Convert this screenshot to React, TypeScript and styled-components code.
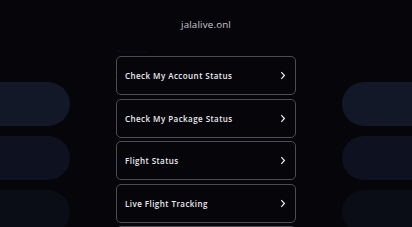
import React from "react";
import styled, { createGlobalStyle } from "styled-components";

const Global = createGlobalStyle`
  html, body { margin: 0; padding: 0; background: #05050a; }
  body { width: 412px; height: 227px; overflow: hidden; font-family: "Open Sans", "DejaVu Sans", sans-serif; }
`;

const Page = styled.div`
  display: grid;
  grid-template-columns: 70px 180px 70px;
  justify-content: space-between;
  width: 412px;
  height: 227px;
  overflow: hidden;
`;

const Side = styled.div`
  display: flex;
  flex-direction: column;
  gap: 10px;
  padding-top: 82px;
`;

const Pill = styled.div<{ $shade: string; $side: "left" | "right" }>`
  height: 44px;
  flex: none;
  background: ${(p) => p.$shade};
  border-radius: ${(p) => (p.$side === "left" ? "0 22px 22px 0" : "22px 0 0 22px")};
`;

const Center = styled.div`
  display: flex;
  flex-direction: column;
`;

const Title = styled.div`
  height: 49px;
  display: flex;
  align-items: center;
  justify-content: center;
  font-size: 9.8px;
  letter-spacing: 0.15px;
  color: #c9c9ce;
`;

const Faint = styled.div`
  font-size: 4px;
  line-height: 5px;
  height: 7px;
  padding-left: 1px;
  color: #1a1a26;
`;

const List = styled.div`
  display: flex;
  flex-direction: column;
  gap: 3.5px;
`;

const Card = styled.a`
  display: flex;
  align-items: center;
  justify-content: space-between;
  height: 37px;
  padding: 0 8px 0 8px;
  border: 1px solid #4c4c52;
  border-radius: 5px;
  color: #ececf0;
  text-decoration: none;
  font-size: 8px;
  font-weight: 600;
  letter-spacing: 0.45px;
  flex: none;
`;

const Chevron = styled.svg`
  width: 6px;
  height: 9px;
  margin-right: 1px;
`;

const items = [
  "Check My Account Status",
  "Check My Package Status",
  "Flight Status",
  "Live Flight Tracking",
  "Flight Tracker",
];

const shades = ["#131829", "#0e1120", "#0a0c16"];

export default function App() {
  return (
    <>
      <Global />
      <Page>
        <Side>
          {shades.map((s) => (
            <Pill key={s} $shade={s} $side="left" />
          ))}
        </Side>
        <Center>
          <Title>jalalive.onl</Title>
          <Faint>Related Searches</Faint>
          <List>
            {items.map((t) => (
              <Card key={t} href="#">
                <span>{t}</span>
                <Chevron viewBox="0 0 6 9">
                  <polyline points="1.3,1.2 4.4,4.5 1.3,7.8" fill="none" stroke="#f0f0f4" strokeWidth="1.2" />
                </Chevron>
              </Card>
            ))}
          </List>
        </Center>
        <Side>
          {shades.map((s) => (
            <Pill key={s} $shade={s} $side="right" />
          ))}
        </Side>
      </Page>
    </>
  );
}
